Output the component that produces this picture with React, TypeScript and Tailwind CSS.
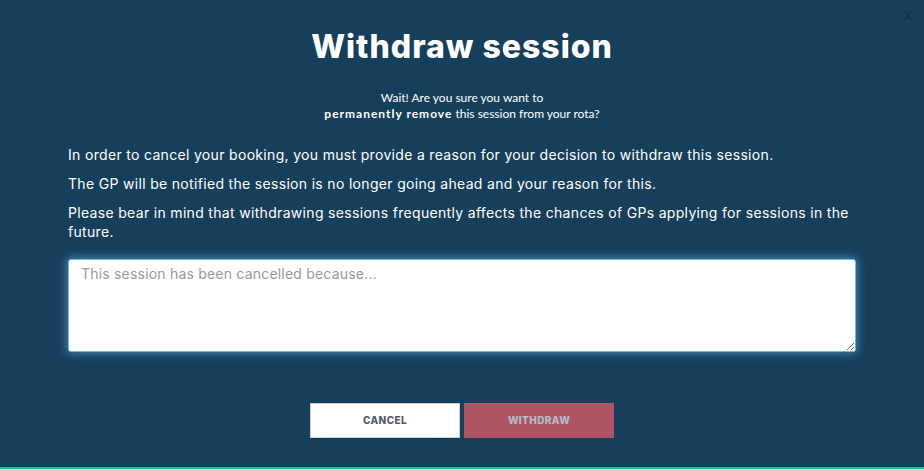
import React, { useState } from 'react';

const App: React.FC = () => {
  const [reason, setReason] = useState('');

  return (
    <div className="relative w-full h-[469px] bg-[#163f5c] overflow-hidden font-['Inter',sans-serif]">
      {/* Schließen-Knopf oben rechts */}
      <button className="absolute top-[7px] right-[12px] text-[12px] text-[#0d2c44] font-['Liberation_Sans',sans-serif]">
        X
      </button>

      <div className="flex flex-col h-full px-[68px]">
        {/* Titel */}
        <h1 className="pt-[26px] text-center text-[32px] leading-[42px] font-extrabold text-white tracking-[1px]">
          Withdraw session
        </h1>

        {/* Hinweis */}
        <p className="mt-[22px] text-center text-[12px] leading-[16px] text-white font-['Lato',sans-serif]">
          Wait! Are you sure you want to
          <br />
          <span className="font-bold tracking-[1px]">permanently remove</span> this session from your rota?
        </p>

        {/* Erklärungstext */}
        <div className="mt-[23px] text-[14px] leading-[19px] text-white tracking-[0.32px]">
          <p className="mb-[10px]">
            In order to cancel your booking, you must provide a reason for your decision to withdraw this session.
          </p>
          <p className="mb-[10px]">The GP will be notified the session is no longer going ahead and your reason for this.</p>
          <p>
            Please bear in mind that withdrawing sessions frequently affects the chances of GPs applying for sessions in the
            future.
          </p>
        </div>

        {/* Begründung */}
        <textarea
          value={reason}
          onChange={e => setReason(e.target.value)}
          placeholder="This session has been cancelled because..."
          className="mt-[18px] h-[93px] w-full rounded-[3px] bg-white border border-[#6fb6ee] shadow-[0_0_8px_2px_rgba(102,175,233,0.55)] px-[12px] py-[3px] text-[14px] tracking-[0.2px] text-gray-700 placeholder:text-[#9a9a9a] outline-none"
        />

        {/* Buttons */}
        <div className="mt-[51px] flex justify-center gap-[4px]">
          <button className="w-[150px] h-[35px] bg-white border border-[#c9d1d8] text-[10px] font-extrabold tracking-[0.4px] text-[#555b63]">
            CANCEL
          </button>
          <button className="w-[150px] h-[35px] bg-[#ae5563] text-[10px] font-extrabold tracking-[0.4px] text-[#b3bcc8]">
            WITHDRAW
          </button>
        </div>
      </div>

      {/* grüne Linie unten */}
      <div className="absolute bottom-0 left-0 w-full h-[2px] bg-[#1fc48b]" />
    </div>
  );
};

export default App;
